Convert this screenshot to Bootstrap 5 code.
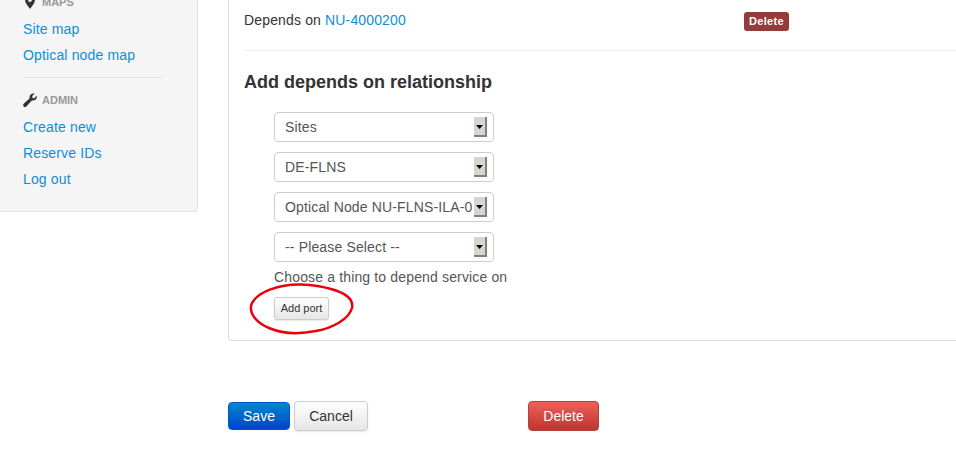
<!DOCTYPE html>
<html lang="en">
<head>
  <meta charset="UTF-8">
  <title>Edit service</title>
  <link href="https://cdn.jsdelivr.net/npm/bootstrap@5.3.3/dist/css/bootstrap.min.css" rel="stylesheet">
  <style>
    html, body { height: 100%; overflow: hidden; }
    body { font-family: "Liberation Sans", Arial, sans-serif; font-size: 14px; line-height: 20px; color: #333; background: #fff; }
    a { color: #0d8fd8; text-decoration: none; }

    /* sidebar, scrolled partly out of the top of the window */
    .side-well { width: 198px; flex: none; margin-top: -9px; padding: 0 0 19px 23px; background: #f5f5f5; border: 1px solid #e3e3e3; border-left: 0; border-radius: 0 0 4px 0; }
    .side-head { display: flex; align-items: center; height: 20px; font-size: 11px; font-weight: 700; color: #999; text-transform: uppercase; }
    .side-head svg { width: 14px; height: 14px; margin-right: 5px; flex: none; }
    .side-link { display: block; line-height: 26px; font-size: 14px; letter-spacing: .15px; }
    .side-rule { width: 139px; height: 1px; margin: 9px 0 12px 1px; background: #e5e5e5; }
    .head-first { margin-bottom: 4px; }
    .head-admin { margin-bottom: 4px; }

    /* main panel runs past the right edge of the window */
    .main-col { margin-left: 30px; flex: none; width: 800px; }
    .edit-panel { height: 341px; padding: 10px 0 0 15px; border-left: 1px solid #ddd; border-bottom: 1px solid #ddd; border-bottom-left-radius: 4px; }
    .dep-name { width: 500px; flex: none; letter-spacing: .15px; }
    .del-label { display: inline-block; margin-top: 2px; padding: 0 4px; width: 45px; height: 19px; line-height: 18px; text-align: center; font-size: 11px; font-weight: 700; letter-spacing: .3px; color: #fff; background: #953b39; border-radius: 3px; }
    .panel-rule { height: 1px; margin: 19px 0 0; background: #eee; }
    .panel-title { margin: 20px 0 19px; font-size: 18px; font-weight: 700; line-height: 22px; color: #333; }
    .dep-form { padding-left: 30px; }
    .old-select { width: 220px; height: 30px; margin-bottom: 10px; padding: 0 20px 0 10px; font-size: 14px; letter-spacing: .15px; line-height: 28px; color: #555; border: 1px solid #ccc; border-radius: 4px; box-shadow: none;
      background-color: #fff; background-size: 13px 20px; background-position: right 6px center; background-repeat: no-repeat;
      background-image: url("data:image/svg+xml,%3Csvg xmlns='http://www.w3.org/2000/svg' width='13' height='20'%3E%3Crect width='13' height='20' fill='%23d8d5cf'/%3E%3Cpath d='M11 0h2v20H0v-2h11z' fill='%23808080'/%3E%3Cpath d='M2 8h7L5.500 12z' fill='%23000'/%3E%3C/svg%3E"); }
    .choose-text { margin-top: -5px; color: #555; letter-spacing: .15px; }
    .port-wrap { position: relative; margin-top: 10px; width: 55px; }
    .add-port { display: block; width: 55px; height: 23px; padding: 0; font-size: 11px; line-height: 21px; color: #333; border: 1px solid #ccc; border-radius: 3px; background: linear-gradient(#fff, #e6e6e6); box-shadow: 0 1px 2px rgba(0,0,0,.1); }
    .red-ring { position: absolute; left: -25px; top: -14px; width: 106px; height: 52px; pointer-events: none; }

    .foot-btns { display: flex; align-items: center; margin-top: 60px; height: 30px; }
    .foot-btn { height: 30px; padding: 0; font-size: 14px; line-height: 28px; border-radius: 4px; }
    .btn-save { width: 62px; height: 28px; line-height: 26px; color: #fff; border: 1px solid #0055cc; background: linear-gradient(#0088cc, #0044cc); }
    .btn-cancel { width: 74px; margin-left: 4px; color: #333; border: 1px solid #ccc; background: linear-gradient(#fff, #e6e6e6); box-shadow: 0 1px 2px rgba(0,0,0,.1); }
    .btn-remove { width: 71px; margin-left: 160px; color: #fff; border: 1px solid #b8403a; background: linear-gradient(#ee5f5b, #bd362f); }
  </style>
</head>
<body>

<div class="d-flex align-items-start">
  <!-- Sidebar -->
  <div class="side-well">
    <div class="side-head head-first">
      <svg viewBox="0 0 14 14"><path fill="#333" fill-rule="evenodd" d="M7 0C4 0 2 2.200 2 5c0 3 3 6 5 9 2-3 5-6 5-9 0-2.800-2-5-5-5zm0 3.200A1.900 1.900 0 1 1 7 7a1.900 1.900 0 0 1 0-3.800z"/></svg>
      Maps
    </div>
    <a class="side-link" href="#">Site map</a>
    <a class="side-link" href="#">Optical node map</a>
    <div class="side-rule"></div>
    <div class="side-head head-admin">
      <svg viewBox="0 0 14 14"><path fill="#333" d="M13.600 2.600c.5 1.700 0 3.200-1.200 4.200-1 .8-2.300 1-3.500.6L3.300 13.400c-.7.700-1.900.7-2.600 0-.7-.7-.7-1.900 0-2.600l6-5.600c-.4-1.300-.1-2.600.8-3.500C8.500.700 10 .2 11.600.700L9.200 3.100l.3 1.900 1.900.3z"/></svg>
      Admin
    </div>
    <a class="side-link" href="#">Create new</a>
    <a class="side-link" href="#">Reserve IDs</a>
    <a class="side-link" href="#">Log out</a>
  </div>

  <!-- Main column -->
  <div class="main-col">
    <div class="edit-panel">
      <div class="d-flex">
        <div class="dep-name">Depends on <a href="#">NU-4000200</a></div>
        <div><span class="del-label">Delete</span></div>
      </div>
      <div class="panel-rule"></div>
      <h4 class="panel-title">Add depends on relationship</h4>
      <div class="dep-form">
        <select class="form-select old-select"><option>Sites</option></select>
        <select class="form-select old-select"><option>DE-FLNS</option></select>
        <select class="form-select old-select"><option>Optical Node NU-FLNS-ILA-01</option></select>
        <select class="form-select old-select"><option>-- Please Select --</option></select>
        <div class="choose-text">Choose a thing to depend service on</div>
        <div class="port-wrap">
          <button class="btn add-port" type="button">Add port</button>
          <svg class="red-ring" viewBox="0 0 106 52"><path fill="none" stroke="#e8000b" stroke-width="2.500" d="M52 1.500C30 1 9 9 3 20c-4 9 3 19 17 25 14 6 32 6 47 3 17-3 33-12 36-23C105 15 93 9 82 6 72 3 62 2 52 1.500z"/></svg>
        </div>
      </div>
    </div>
    <div class="foot-btns">
      <button class="btn foot-btn btn-save" type="button">Save</button>
      <button class="btn foot-btn btn-cancel" type="button">Cancel</button>
      <button class="btn foot-btn btn-remove" type="button">Delete</button>
    </div>
  </div>
</div>

</body>
</html>
